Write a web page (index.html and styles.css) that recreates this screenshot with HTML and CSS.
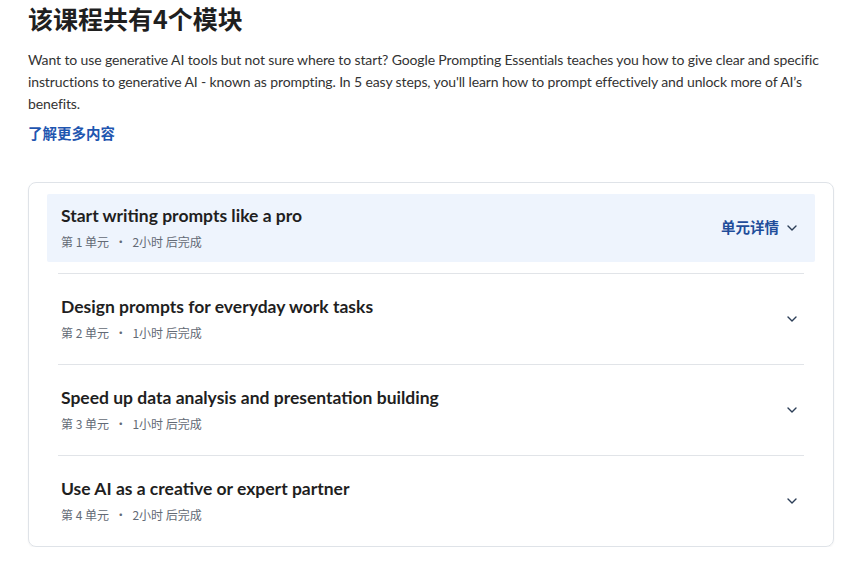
FILE: index.html
```html
<!DOCTYPE html>
<html lang="zh">
<head>
<meta charset="utf-8">
<link rel="stylesheet" href="styles.css">
</head>
<body>
<main class="page">
  <h2 class="heading">该课程共有4个模块</h2>
  <p class="intro">Want to use generative AI tools but not sure where to start? Google Prompting Essentials teaches you how to give clear and specific instructions to generative AI - known as prompting. In 5 easy steps, you'll learn how to prompt effectively and unlock more of AI’s benefits.</p>
  <a class="more" href="#">了解更多内容</a>

  <section class="card">
    <div class="module active">
      <div class="info">
        <div class="title">Start writing prompts like a pro</div>
        <div class="meta">第 1 单元 <span class="dot">•</span> 2小时 后完成</div>
      </div>
      <div class="toggle"><span class="details">单元详情</span><svg class="chev" viewBox="0 0 10 6" width="10" height="6"><path d="M1 1l4 4 4-4" fill="none" stroke="currentColor" stroke-width="1.4" stroke-linecap="round" stroke-linejoin="round"/></svg></div>
    </div>
    <hr class="sep">
    <div class="module">
      <div class="info">
        <div class="title">Design prompts for everyday work tasks</div>
        <div class="meta">第 2 单元 <span class="dot">•</span> 1小时 后完成</div>
      </div>
      <div class="toggle"><svg class="chev" viewBox="0 0 10 6" width="10" height="6"><path d="M1 1l4 4 4-4" fill="none" stroke="currentColor" stroke-width="1.4" stroke-linecap="round" stroke-linejoin="round"/></svg></div>
    </div>
    <hr class="sep">
    <div class="module">
      <div class="info">
        <div class="title">Speed up data analysis and presentation building</div>
        <div class="meta">第 3 单元 <span class="dot">•</span> 1小时 后完成</div>
      </div>
      <div class="toggle"><svg class="chev" viewBox="0 0 10 6" width="10" height="6"><path d="M1 1l4 4 4-4" fill="none" stroke="currentColor" stroke-width="1.4" stroke-linecap="round" stroke-linejoin="round"/></svg></div>
    </div>
    <hr class="sep">
    <div class="module">
      <div class="info">
        <div class="title">Use AI as a creative or expert partner</div>
        <div class="meta">第 4 单元 <span class="dot">•</span> 2小时 后完成</div>
      </div>
      <div class="toggle"><svg class="chev" viewBox="0 0 10 6" width="10" height="6"><path d="M1 1l4 4 4-4" fill="none" stroke="currentColor" stroke-width="1.4" stroke-linecap="round" stroke-linejoin="round"/></svg></div>
    </div>
  </section>
</main>
</body>
</html>
```

FILE: styles.css
```css
html, body {
  margin: 0;
  padding: 0;
  background: #ffffff;
}
body {
  font-family: Lato, "Noto Sans CJK SC", sans-serif;
  color: #1f1f1f;
}
.page {
  padding: 2px 22px 0 28px;
}
.heading {
  margin: 0;
  font-family: "Noto Sans CJK SC", sans-serif;
  font-size: 25px;
  line-height: 32px;
  font-weight: 700;
  color: #1f1f1f;
}
.intro {
  margin: 15px 0 0;
  font-size: 14px;
  line-height: 22px;
  color: #333333;
  letter-spacing: -0.12px;
}
.more {
  display: inline-block;
  margin-top: 7px;
  font-family: "Noto Sans CJK SC", sans-serif;
  font-size: 14.5px;
  line-height: 22px;
  font-weight: 700;
  color: #1f56b0;
  text-decoration: none;
}
.card {
  margin-top: 38px;
  border: 1px solid #dfe3e8;
  border-radius: 8px;
  padding: 11px 18px;
  box-shadow: 0 1px 2px rgba(0,0,0,0.05);
}
.module {
  display: flex;
  align-items: center;
  justify-content: space-between;
  height: 68px;
  box-sizing: border-box;
  padding: 0 18px 0 14px;
  border-radius: 2px;
}
.module.active {
  background: #eef4fd;
}
.info {
  display: flex;
  flex-direction: column;
  gap: 6px;
}
.title {
  font-size: 17.5px;
  line-height: 24px;
  font-weight: 700;
  color: #1f1f1f;
  margin-top: -2px;
}
.meta {
  font-family: "Noto Sans CJK SC", sans-serif;
  font-size: 12px;
  line-height: 16px;
  color: #636a75;
}
.dot {
  margin: 0 3px;
}
.toggle {
  display: flex;
  align-items: center;
  gap: 8px;
  color: #2c3e57;
}
.details {
  font-family: "Noto Sans CJK SC", sans-serif;
  font-size: 14.5px;
  line-height: 20px;
  font-weight: 700;
  color: #1f4d9a;
  margin-top: -2px;
}
.chev {
  display: block;
}
.sep {
  margin: 11px 11px;
  border: 0;
  height: 1px;
  background: #e1e4e8;
}
```
